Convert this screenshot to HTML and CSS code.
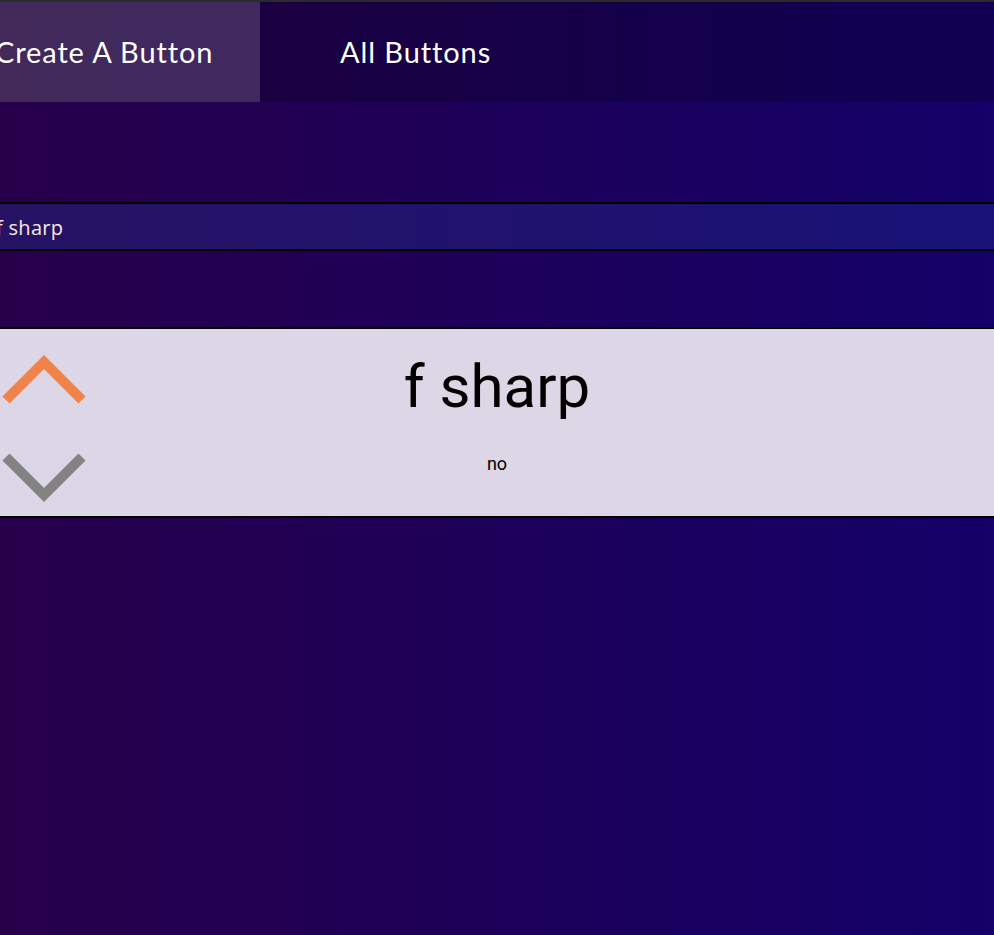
FILE: index.html
```html
<!DOCTYPE html>
<html>
<head>
<meta charset="utf-8">
<link rel="stylesheet" href="styles.css">
</head>
<body>
<div class="page">
  <nav class="nav">
    <div class="nav-inner">
      <a class="tab tab-active">Create A Button</a>
      <a class="tab">All Buttons</a>
    </div>
  </nav>
  <main class="main">
    <div class="search">
      <input class="search-input" type="text" value="f sharp">
    </div>
    <section class="card">
      <div class="votes">
        <svg class="arrow" width="90" height="60" viewBox="0 0 90 60">
          <polyline points="6,46 44,8 82,46" fill="none" stroke="#f0834a" stroke-width="10" stroke-linejoin="miter"/>
        </svg>
        <svg class="arrow" width="90" height="60" viewBox="0 0 90 60">
          <polyline points="6,12 44,50 82,12" fill="none" stroke="#838383" stroke-width="10" stroke-linejoin="miter"/>
        </svg>
      </div>
      <div class="card-body">
        <h1 class="card-title">f sharp</h1>
        <p class="card-sub">no</p>
      </div>
      <div class="spacer"></div>
    </section>
  </main>
</div>
</body>
</html>
```

FILE: styles.css
```css
html, body {
  margin: 0;
  padding: 0;
  height: 100%;
}
body {
  background: linear-gradient(to right, #27004a, #130068);
  border-top: 2px solid #2b2b2b;
  box-sizing: border-box;
  overflow: hidden;
  font-family: "Open Sans", sans-serif;
}
.page {
  width: 100%;
}
.nav {
  height: 100px;
  background: rgba(0, 0, 0, 0.2);
  overflow: hidden;
}
.nav-inner {
  display: flex;
  height: 100%;
  margin-left: -56px;
}
.tab {
  display: flex;
  align-items: center;
  height: 100%;
  padding: 0 48px;
  font-family: "Lato", sans-serif;
  font-size: 29px;
  letter-spacing: 0.9px;
  color: #ffffff;
  white-space: nowrap;
  box-sizing: border-box;
}
.tab-active {
  background: rgba(255, 255, 255, 0.16);
  width: 316px;
  padding-left: 51px;
  padding-bottom: 2px;
}
.tab + .tab {
  padding: 0 80px 2px;
}
.main {
  padding-top: 100px;
}
.search {
  border-top: 2px solid #000;
  border-bottom: 2px solid #000;
  background: rgba(40, 60, 160, 0.3);
  height: 45px;
  overflow: hidden;
}
.search-input {
  display: block;
  width: 100%;
  height: 45px;
  margin-left: -4px;
  padding: 1px 0 0 0;
  border: none;
  outline: none;
  background: transparent;
  color: #fbe8de;
  font-family: "Open Sans", sans-serif;
  font-size: 20px;
  letter-spacing: 0.3px;
  box-sizing: border-box;
}
.card {
  margin-top: 76px;
  border-top: 2px solid #000;
  border-bottom: 2px solid #000;
  background: #dcd6e6;
  height: 187px;
  display: grid;
  grid-template-columns: 90px 1fr 90px;
  align-items: start;
}
.votes {
  display: flex;
  flex-direction: column;
  gap: 31px;
  padding-top: 25px;
}
.arrow {
  display: block;
}
.card-body {
  text-align: center;
  padding-top: 23px;
}
.card-title {
  margin: 0;
  font-family: "Roboto", sans-serif;
  font-weight: 400;
  font-size: 60px;
  line-height: 70px;
  color: #000;
}
.card-sub {
  margin: 32px 0 0 0;
  font-family: "Roboto", sans-serif;
  font-size: 18px;
  line-height: 20px;
  color: #000;
}
```
